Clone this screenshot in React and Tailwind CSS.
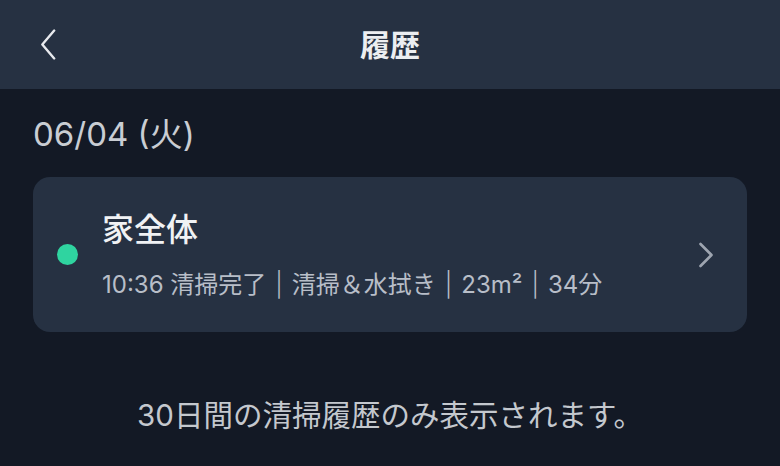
import React from "react";

const ChevronLeft = ({ className }) => (
  <svg viewBox="0 0 16 30" fill="none" className={className}>
    <path d="M14 1.5L2.5 15 14 28.5" stroke="currentColor" strokeWidth="2.3" strokeLinecap="round" strokeLinejoin="round" />
  </svg>
);

const ChevronRight = ({ className }) => (
  <svg viewBox="0 0 16 26" fill="none" className={className}>
    <path d="M2.5 2L13.5 13 2.5 24" stroke="currentColor" strokeWidth="2.6" strokeLinecap="round" strokeLinejoin="round" />
  </svg>
);

const Sep = () => <span className="mx-[9px] font-light">|</span>;

const App = () => {
  return (
    <div
      className="w-[780px] h-[466px] bg-[#131925] overflow-hidden flex flex-col"
      style={{ fontFamily: 'Inter, "Noto Sans CJK JP", sans-serif' }}
    >
      {/* Header */}
      <div className="h-[89px] shrink-0 bg-[#263142] flex items-center relative">
        <button className="absolute left-[39px] top-[29px] text-[#e8eaee]">
          <ChevronLeft className="w-[18px] h-[31px]" />
        </button>
        <h1 className="w-full text-center text-[30px] font-bold text-[#eceef1] leading-none">
          履歴
        </h1>
      </div>

      {/* Body */}
      <div className="px-[33px]">
        <div className="mt-[23px] text-[33px] leading-[44px] text-[#c9cdd3]">
          06/04 (火)
        </div>

        <div className="mt-[21px] h-[155px] rounded-[17px] bg-[#263142] flex items-center pl-[24px] pr-[33px]">
          <div className="w-[21px] h-[21px] rounded-full bg-[#2fd4a0] shrink-0" />
          <div className="ml-[24px] flex-1 flex flex-col">
            <div className="text-[32px] leading-[40px] font-medium text-[#f0f2f4]">家全体</div>
            <div className="mt-[20px] text-[24px] leading-[30px] text-[#b8bec8] whitespace-pre">
              10:36 清掃完了<Sep />清掃＆水拭き<Sep />23m²<Sep />34分
            </div>
          </div>
          <ChevronRight className="w-[16px] h-[26px] text-[#9ea5b0]" />
        </div>

        <div className="mt-[64px] text-center text-[29.5px] leading-[38px] text-[#c4c8ce]">
          30日間の清掃履歴のみ表示されます。
        </div>
      </div>
    </div>
  );
};

export default App;
